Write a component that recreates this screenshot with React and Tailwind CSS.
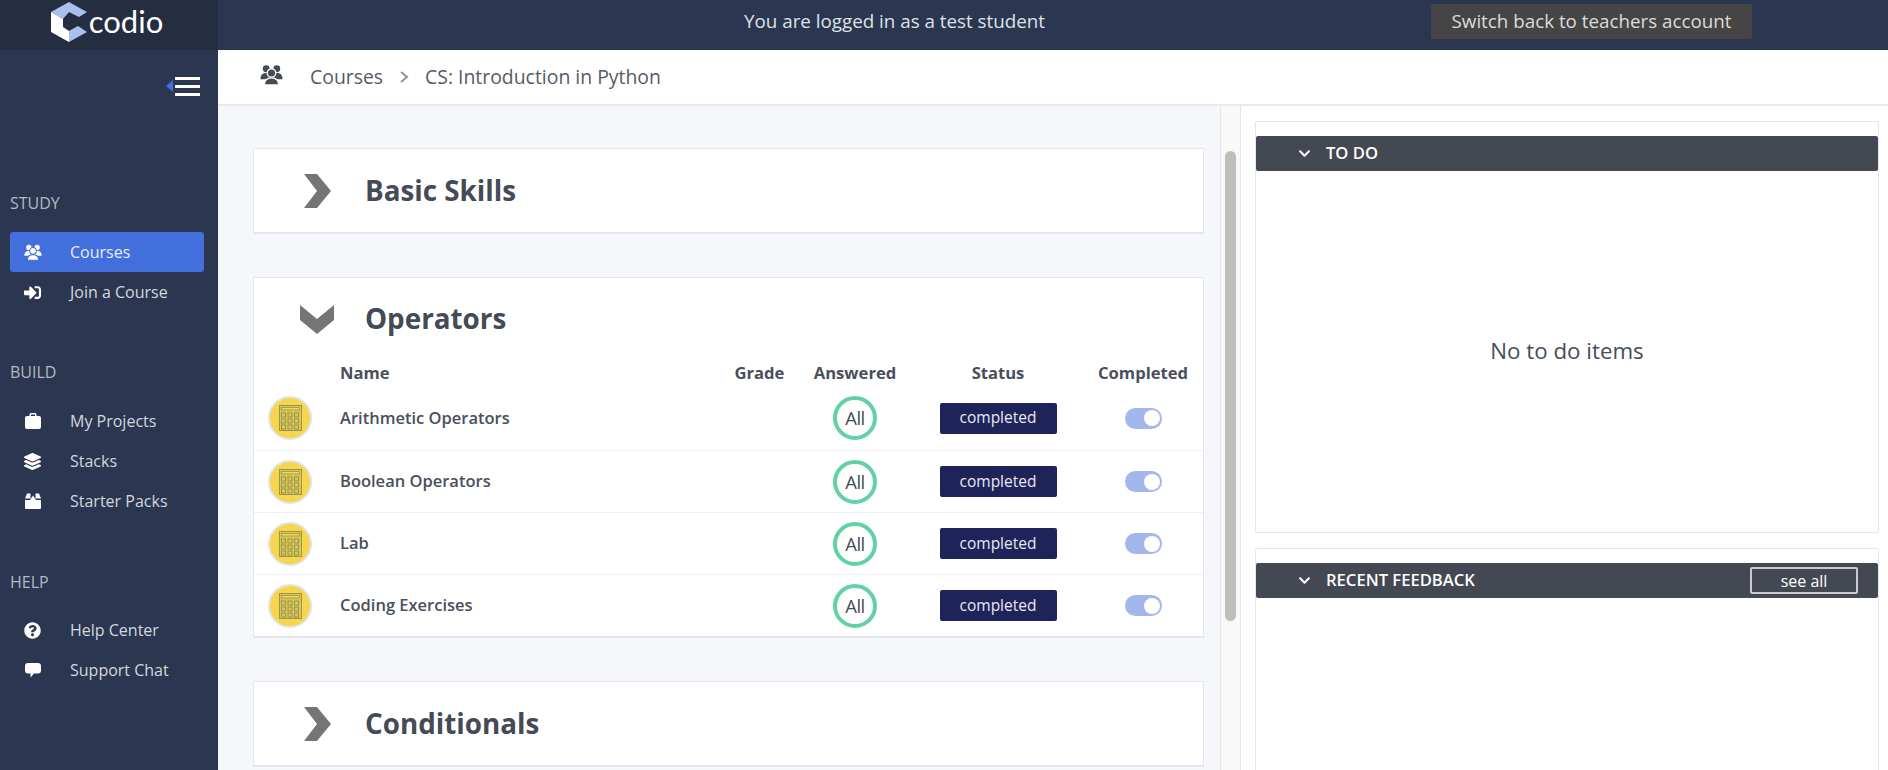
import React from "react";
import { FaSignInAlt, FaLayerGroup, FaQuestionCircle, FaChevronDown } from "react-icons/fa";

function Logo() {
  return (
    <div className="flex items-center justify-center w-[218px] h-full bg-[#252d41] shrink-0 pr-[4px]">
      <svg width="36" height="40" viewBox="0 0 36 40" className="mr-[2px] mt-[-6px]">
        <polygon points="0,10 18,0 36,10 28,15 18,10 12,17" fill="#a9c0ee" />
        <polygon points="0,10 12,17 12,25 18,29 18,40 0,30" fill="#ffffff" />
        <polygon points="18,29 27,24 36,30 18,40" fill="#a9c0ee" />
      </svg>
      <span className="text-[31px] text-white leading-none font-['Lato',sans-serif] mt-[-7px]">codio</span>
    </div>
  );
}

function Users({ size = 18, color = "#ffffff", gap = "#2b3650" }) {
  return (
    <svg width={size} height={size} viewBox="0 0 24 24" fill={color}>
      <circle cx="6.5" cy="6" r="3.6" />
      <path d="M0.5 17 C0.5 12 3 10.5 6.5 10.5 C10 10.5 12 12 12 17 Z" />
      <circle cx="17.5" cy="6" r="3.6" />
      <path d="M12 17 C12 12 14 10.5 17.5 10.5 C21 10.5 23.5 12 23.5 17 Z" />
      <circle cx="12" cy="10.5" r="4.4" stroke={gap} strokeWidth="1.4" />
      <path d="M4.5 23 C4.5 17 8 15.5 12 15.5 C16 15.5 19.5 17 19.5 23 Z" stroke={gap} strokeWidth="1.4" />
    </svg>
  );
}

function Briefcase() {
  return (
    <svg width="18" height="18" viewBox="0 0 18 18" fill="currentColor">
      <path d="M5.5 4 V2.5 A1.5 1.5 0 0 1 7 1 H11 A1.5 1.5 0 0 1 12.5 2.5 V4 H15 A2 2 0 0 1 17 6 V15 A2 2 0 0 1 15 17 H3 A2 2 0 0 1 1 15 V6 A2 2 0 0 1 3 4 Z M7 4 H11 V2.5 H7 Z" fillRule="evenodd" />
    </svg>
  );
}

function Pack() {
  return (
    <svg width="18" height="18" viewBox="0 0 18 18" fill="currentColor">
      <path d="M1 6.5 L3 1.5 H6.5 V6.5 Z M11.5 1.5 H15 L17 6.5 H11.5 Z M1 8 H6 L9 3.5 L12 8 H17 V16 A1 1 0 0 1 16 17 H2 A1 1 0 0 1 1 16 Z" />
    </svg>
  );
}

function Chat() {
  return (
    <svg width="18" height="18" viewBox="0 0 18 18" fill="currentColor">
      <path d="M4 2 H14 A3 3 0 0 1 17 5 V9.5 A3 3 0 0 1 14 12.5 H10 L6.5 16.5 V12.5 H4 A3 3 0 0 1 1 9.5 V5 A3 3 0 0 1 4 2 Z" />
    </svg>
  );
}

function NavItem({ icon, label, active }) {
  return (
    <div className={`flex items-center h-[40px] w-[194px] rounded-[3px] ${active ? "bg-[#426fdc] text-[#e8edfb]" : "text-[#d3d7de]"}`}>
      <span className="w-[46px] flex justify-center text-white text-[17px] pr-[1px]">{icon}</span>
      <span className="ml-[14px] text-[16px]">{label}</span>
    </div>
  );
}

function NavGroup({ title, className, children }) {
  return (
    <div className={className}>
      <div className="text-[16px] leading-[22px] text-[#b4b8c1] pl-[10px]">{title}</div>
      {children}
    </div>
  );
}

function Sidebar() {
  return (
    <aside className="w-[218px] shrink-0 bg-[#2b3650] flex flex-col">
      <div className="flex justify-end items-center h-[40px] mt-[16px] pr-[18px]">
        <div className="w-0 h-0 border-y-[6px] border-y-transparent border-r-[7px] border-r-[#426fdc] mr-[2px]" />
        <div className="flex flex-col gap-[5px]">
          <div className="w-[25px] h-[3px] bg-white" />
          <div className="w-[25px] h-[3px] bg-white" />
          <div className="w-[25px] h-[3px] bg-white" />
        </div>
      </div>
      <NavGroup title="STUDY" className="mt-[86px]">
        <div className="pl-[10px] mt-[18px]">
          <NavItem active icon={<Users gap="#426fdc" />} label="Courses" />
          <NavItem icon={<FaSignInAlt />} label="Join a Course" />
        </div>
      </NavGroup>
      <NavGroup title="BUILD" className="mt-[49px]">
        <div className="pl-[10px] mt-[18px]">
          <NavItem icon={<Briefcase />} label="My Projects" />
          <NavItem icon={<FaLayerGroup />} label="Stacks" />
          <NavItem icon={<Pack />} label="Starter Packs" />
        </div>
      </NavGroup>
      <NavGroup title="HELP" className="mt-[50px]">
        <div className="pl-[10px] mt-[17px]">
          <NavItem icon={<FaQuestionCircle />} label="Help Center" />
          <NavItem icon={<Chat />} label="Support Chat" />
        </div>
      </NavGroup>
    </aside>
  );
}

function ChevronRight() {
  return (
    <svg width="30" height="34" viewBox="0 0 30 34" className="shrink-0">
      <polygon points="2,0 15,0 29,17 15,34 2,34 15,17" fill="#757575" />
    </svg>
  );
}

function ChevronDown() {
  return (
    <svg width="36" height="30" viewBox="0 0 36 30" className="shrink-0">
      <polygon points="1,1 1,16 18,30 35,16 35,1 18,15" fill="#757575" />
    </svg>
  );
}

function Calculator() {
  const cells = [];
  for (let r = 0; r < 3; r++) {
    for (let c = 0; c < 3; c++) {
      cells.push(<rect key={`${r}-${c}`} x={2.5 + c * 6.5} y={8 + r * 6} width="4" height="4" fill="none" stroke="#9c9355" strokeWidth="1" />);
    }
  }
  return (
    <div className="w-[44px] h-[44px] rounded-full bg-[#f6d64c] border-2 border-[#e0e3ea] flex items-center justify-center shrink-0">
      <svg width="23" height="26" viewBox="0 0 23 26">
        <rect x="0.5" y="0.5" width="22" height="25" fill="#d8c750" stroke="#9c9355" />
        <rect x="2.5" y="2.5" width="18" height="2.5" fill="#f6d64c" stroke="#9c9355" strokeWidth="0.8" />
        {cells}
      </svg>
    </div>
  );
}

function Row({ name, first }) {
  return (
    <div className={`grid grid-cols-[86px_1fr_71px_120px_166px_122px] items-center ${first ? "h-[63px] pb-[1px]" : "h-[62px] border-t border-[#f0f1f7]"}`}>
      <div className="pl-[14px]"><Calculator /></div>
      <div className="text-[16.5px] font-semibold text-[#4a4f5c] leading-none">{name}</div>
      <div />
      <div className="flex justify-center">
        <div className="w-[44px] h-[44px] rounded-full border-[4px] border-[#62d2a6] flex items-center justify-center text-[18.5px] tracking-[-0.5px] text-[#474c59]">All</div>
      </div>
      <div className="flex justify-center">
        <div className="w-[117px] h-[31px] rounded-[2px] bg-[#1e235a] text-[#e8e9f1] text-[15.5px] flex items-center justify-center">completed</div>
      </div>
      <div className="flex justify-center pl-[2px]">
        <div className="w-[37px] h-[21px] rounded-full bg-[#a2b7ec] flex items-center justify-end pr-[2px]">
          <div className="w-[16px] h-[16px] rounded-full bg-white" />
        </div>
      </div>
    </div>
  );
}

function Title({ children }) {
  return <h2 className="text-[27.8px] font-bold text-[#454a57] leading-none ml-[32px]">{children}</h2>;
}

function Collapsed({ title }) {
  return (
    <section className="h-[86px] shrink-0 bg-white border border-[#e3e5f0] border-b-2 pl-[48px] flex items-center">
      <ChevronRight />
      <div className="ml-[1px]"><Title>{title}</Title></div>
    </section>
  );
}

function Operators() {
  return (
    <section className="bg-white border border-[#e3e5f0] border-b-2 shrink-0">
      <div className="h-[81px] pl-[45px] flex items-center">
        <ChevronDown />
        <div className="-ml-[2px]"><Title>Operators</Title></div>
      </div>
      <div className="grid grid-cols-[86px_1fr_71px_120px_166px_122px] h-[28px] items-center text-[16.6px] font-bold text-[#4a4f5c] leading-none">
        <div />
        <div>Name</div>
        <div className="text-center">Grade</div>
        <div className="text-center">Answered</div>
        <div className="text-center">Status</div>
        <div className="text-center pl-[2px]">Completed</div>
      </div>
      <Row first name="Arithmetic Operators" />
      <Row name="Boolean Operators" />
      <Row name="Lab" />
      <Row name="Coding Exercises" />
    </section>
  );
}

function Card({ title, right, className, children }) {
  return (
    <section className={`bg-white border border-[#e3e5f0] rounded-[2px] pt-[14px] flex flex-col ${className}`}>
      <div className="h-[35px] bg-[#444853] flex items-center rounded-[2px] pl-[41px] pr-[20px] text-white">
        <FaChevronDown className="text-[13px] w-[15px]" />
        <span className="ml-[14px] text-[16.6px] font-semibold leading-none">{title}</span>
        {right}
      </div>
      {children}
    </section>
  );
}

export default function App() {
  return (
    <div className="h-[770px] w-[1888px] overflow-hidden flex flex-col font-['Open_Sans',sans-serif] bg-[#f6f7fb]">
      <header className="h-[50px] shrink-0 bg-[#2b3650] flex items-center">
        <Logo />
        <div className="w-[1213px] text-center text-[18.8px] text-[#dfe2e8] pb-[7px] pl-[140px]">You are logged in as a test student</div>
        <button className="w-[321px] h-[35px] rounded-[2px] bg-[#454545] text-[18.8px] text-[#dcdcdc] mb-[7px]">Switch back to teachers account</button>
      </header>
      <div className="flex flex-1 min-h-0">
        <Sidebar />
        <div className="flex-1 flex flex-col min-w-0">
          <nav className="h-[56px] shrink-0 bg-white border-b-2 border-[#e8eaf2] flex items-center pl-[42px] text-[#575b66] text-[19.4px]">
            <span className="mb-[6px]"><Users size={23} color="#454a57" gap="#ffffff" /></span>
            <span className="ml-[27px]">Courses</span>
            <svg width="10" height="12" viewBox="0 0 10 12" className="ml-[16px]">
              <path d="M2 1 L8 6 L2 11" fill="none" stroke="#8f929a" strokeWidth="2" />
            </svg>
            <span className="ml-[16px]">CS: Introduction in Python</span>
          </nav>
          <div className="flex flex-1 min-h-0">
            <div className="w-[1002px] shrink-0 pl-[35px] pr-[16px] pt-[42px] overflow-hidden flex flex-col gap-[43px]">
              <Collapsed title="Basic Skills" />
              <Operators />
              <Collapsed title="Conditionals" />
            </div>
            <div className="w-[20px] shrink-0 border-l border-[#e3e5f0] bg-[#f9f9f9] pl-[4px] pt-[45px]">
              <div className="w-[11px] h-[470px] rounded-full bg-[#bdbfbd]" />
            </div>
            <div className="flex-1 bg-white border-l border-[#e3e5f0] pt-[15px] pl-[14px] pr-[9px] flex flex-col gap-[15px] min-w-0">
              <Card title="TO DO" className="h-[412px] shrink-0">
                <div className="flex-1 flex items-center justify-center text-[22.3px] text-[#474c59] pb-[2px]">No to do items</div>
              </Card>
              <Card
                title="RECENT FEEDBACK"
                className="h-[300px] shrink-0"
                right={
                  <button className="ml-auto w-[108px] h-[27px] border-2 border-[#c9cbd0] rounded-[2px] text-[16px] font-normal text-white">see all</button>
                }
              />
            </div>
          </div>
        </div>
      </div>
    </div>
  );
}
